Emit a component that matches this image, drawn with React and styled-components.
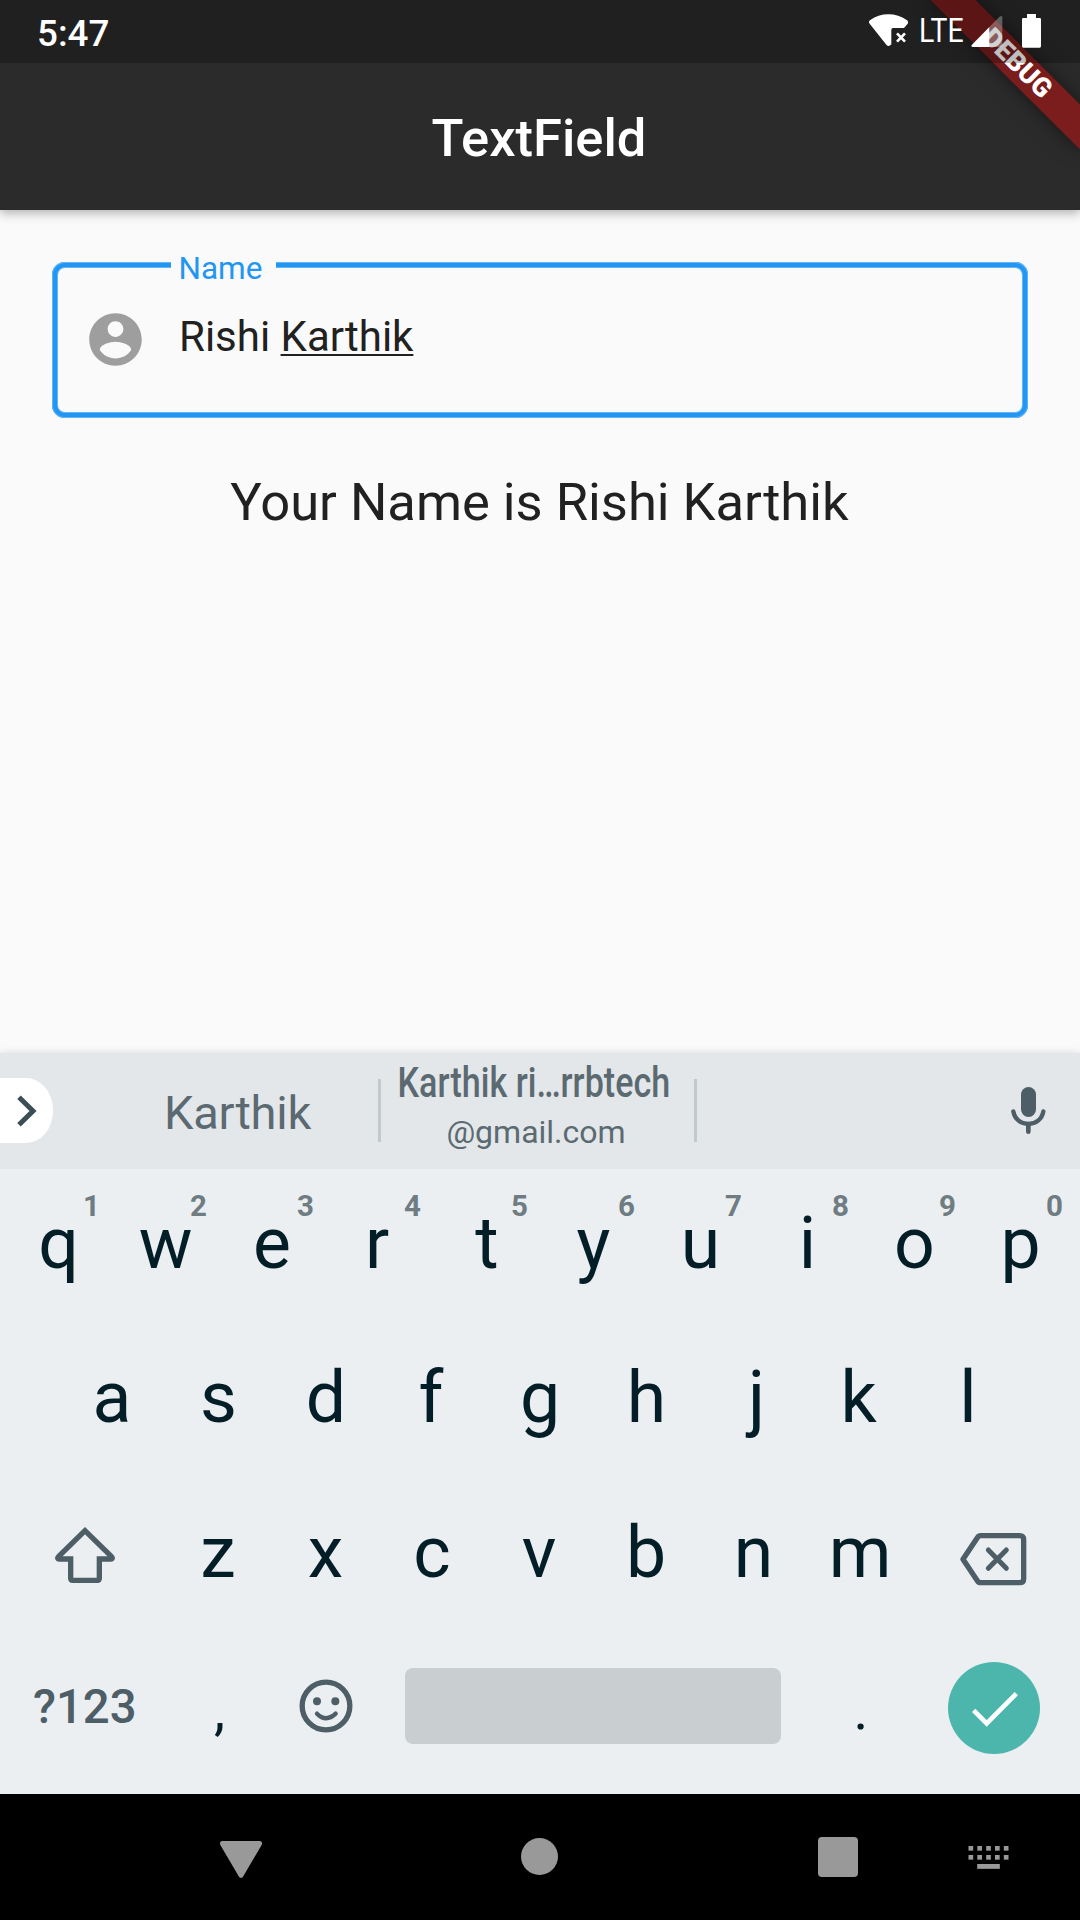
import React from "react";
import styled, { createGlobalStyle } from "styled-components";

const GlobalStyle = createGlobalStyle`
  *, *::before, *::after { box-sizing: border-box; }
  body { margin: 0; background: #fafafa; }
`;

const Screen = styled.div`
  display: flex;
  flex-direction: column;
  width: 1080px;
  height: 1920px;
  overflow: hidden;
  background: #fafafa;
  color: #212121;
  font-family: Roboto, "Liberation Sans", sans-serif;
`;

const Icon = styled.svg`
  display: block;
  flex: none;
  width: ${(p) => p.$w}px;
  height: ${(p) => p.$h}px;
`;

/* ---------- header ---------- */

const Header = styled.header`
  position: relative;
  z-index: 1;
  flex: none;
  height: 210px;
  background: #2b2b2b;
  box-shadow: 0 3px 10px rgba(0, 0, 0, 0.3);
`;

const StatusBar = styled.div`
  position: relative;
  z-index: 2;
  display: flex;
  justify-content: space-between;
  height: 63px;
  padding: 14px 38px 0 37px;
  background: rgba(0, 0, 0, 0.25);
  color: #fff;
`;

const Clock = styled.span`
  font-size: 36.75px;
  font-weight: 500;
  line-height: 39px;
`;

const StatusIcons = styled.div`
  display: flex;
  align-items: flex-start;
`;

const NetworkLabel = styled.span`
  width: 52px;
  margin-left: 10px;
  font-size: 33px;
  line-height: 34px;
  transform: scaleX(0.86);
  transform-origin: left;
`;

const SignalSlot = styled.div`
  margin-right: 18px;
`;

const Title = styled.h1`
  margin: 0;
  padding-right: 2px;
  color: #fff;
  font-size: 52.5px;
  font-weight: 500;
  line-height: 150px;
  text-align: center;
`;

const RibbonClip = styled.div`
  position: absolute;
  top: 0;
  right: 0;
  width: 260px;
  height: 210px;
  overflow: hidden;
`;

const Ribbon = styled.div`
  position: absolute;
  top: 73.5px;
  left: 155px;
  width: 210px;
  height: 31.5px;
  transform-origin: 105px -73.5px;
  transform: rotate(45deg);
  background: #7b1c1d;
  box-shadow: 0 0 19px rgba(0, 0, 0, 0.5);
  color: #fff;
  font-size: 26.8px;
  font-weight: 900;
  line-height: 31.5px;
  text-align: center;
`;

/* ---------- form ---------- */

const Content = styled.main`
  flex: none;
  display: flex;
  flex-direction: column;
  height: 843px;
  padding: 52px 52px 0;
`;

const Field = styled.div`
  position: relative;
  display: flex;
  align-items: flex-start;
  height: 156px;
  padding: 46px 32px 0;
  border-radius: 13px;
  box-shadow:
    inset 0 0 0 1px #64b5f7,
    inset 0 0 0 5px #2196f3,
    inset 0 0 0 6px #64b5f7;
`;

const FieldLabel = styled.label`
  position: absolute;
  top: -11px;
  left: 119px;
  width: 105px;
  padding-left: 7.5px;
  background: #fafafa;
  color: #2196f3;
  font-size: 31.5px;
  line-height: 36px;
`;

const FieldValue = styled.div`
  margin: 4px 0 0 32px;
  font-size: 42px;
  line-height: 49px;
`;

const Composing = styled.span`
  text-decoration: underline;
  text-decoration-thickness: 2px;
  text-decoration-skip-ink: none;
  text-underline-offset: 3px;
`;

const Message = styled.p`
  margin: 54px 0 0;
  padding-right: 1px;
  font-size: 52.5px;
  line-height: 60px;
  text-align: center;
`;

/* ---------- keyboard ---------- */

const Keyboard = styled.section`
  position: relative;
  flex: none;
  height: 741px;
  background: #ebeff2;
  color: #041e28;
  box-shadow: 0 0 8px rgba(0, 0, 0, 0.13);
`;

const Strip = styled.div`
  display: flex;
  height: 116px;
  background: #e3e7ea;
  color: #5b6a71;
`;

const Expand = styled.button`
  display: flex;
  align-items: center;
  width: 53px;
  height: 65px;
  margin: 25px 47px 0 0;
  padding: 0 0 0 15px;
  border: 0;
  border-radius: 0 27px 27px 0 / 0 32px 32px 0;
  background: #fff;
`;

const Suggestion = styled.div`
  display: flex;
  flex-direction: column;
  align-items: center;
  width: ${(p) => p.$width}px;
  padding-top: ${(p) => p.$top}px;
  padding-right: ${(p) => p.$shift || 0}px;
  white-space: nowrap;
`;

const Word = styled.span`
  font-size: 47px;
  line-height: 56px;
  letter-spacing: -0.2px;
`;

const Squeezed = styled.span`
  font-size: 42px;
  font-weight: 500;
  line-height: 48px;
  transform: scaleX(0.812);
`;

const SecondLine = styled.span`
  padding-left: 4px;
  font-size: 32px;
  line-height: 50px;
`;

const Divider = styled.div`
  width: 3px;
  height: 63px;
  margin-top: 26px;
  background: #c3c8cb;
`;

const MicSlot = styled.div`
  margin: 33px 33px 0 auto;
`;

const Row = styled.div`
  display: flex;
  height: 154.5px;
  padding: 0 ${(p) => p.$inset || 5}px;
`;

const Key = styled.div`
  position: relative;
  display: flex;
  align-items: center;
  justify-content: center;
  width: ${(p) => 107 * (p.$span || 1)}px;
  padding-top: ${(p) => p.$drop || 0}px;
  padding-bottom: ${(p) => p.$lift || 0}px;
  padding-left: ${(p) => Math.max(p.$nudge || 0, 0) * 2}px;
  padding-right: ${(p) => Math.max(-(p.$nudge || 0), 0) * 2}px;
`;

const Letter = styled.span`
  font-size: 71.5px;
  line-height: 84px;
`;

const Punct = styled.span`
  font-size: 56px;
  line-height: 66px;
`;

const Hint = styled.sup`
  position: absolute;
  top: 19px;
  right: 12px;
  color: #6f7c82;
  font-size: 29.5px;
  font-weight: 700;
  line-height: 36px;
`;

const Symbols = styled.span`
  color: #4d5e66;
  font-size: 47.25px;
  font-weight: 500;
  line-height: 56px;
`;

const Space = styled.div`
  width: 376px;
  height: 76px;
  border-radius: 8px;
  background: #c9ced1;
`;

const Enter = styled.div`
  display: flex;
  align-items: center;
  justify-content: center;
  width: 92px;
  height: 92px;
  border-radius: 50%;
  background: #4db6ac;
`;

/* ---------- navigation bar ---------- */

const NavBar = styled.nav`
  display: flex;
  flex: none;
  height: 126px;
  padding: 43px 0 0 220px;
  background: #000;
`;

const NavItem = styled.div`
  width: ${(p) => p.$w}px;
`;

const HomeDot = styled.div`
  width: 37px;
  height: 37px;
  margin-top: 1px;
  border-radius: 50%;
  background: #999;
`;

const RecentsSquare = styled.div`
  width: 40px;
  height: 40px;
  border-radius: 4px;
  background: #999;
`;

const GLYPH = "#4d5e66";

function WifiIcon() {
  return (
    <Icon $w={41} $h={35} viewBox="84 42 123 105" fill="#fff">
      <path d="M89 71Q84 65 91 60Q114 43 145 43T200 60Q207 65 203 71L192 84H159Q154 84 154 89V133Q146 143 139 134Z" />
      <path d="M171 100L195 125M195 100L171 125" stroke="#fff" strokeWidth="8" />
    </Icon>
  );
}

function SignalIcon() {
  return (
    <Icon $w={32} $h={35} viewBox="392 42 96 105" fill="#fff">
      <path d="M447 81V141H397Q390 140 395 134Z" />
      <path d="M447 81L477 51Q485 45 486 52V136Q486 141 481 141H447Z" opacity="0.3" />
    </Icon>
  );
}

function BatteryIcon() {
  return (
    <Icon $w={21} $h={35} viewBox="543 42 63 105" fill="#fff">
      <path d="M561 42H588V54H599Q603 54 603 58V139Q603 143 599 143H550Q546 143 546 139V58Q546 54 550 54H561Z" />
    </Icon>
  );
}

function AccountIcon() {
  return (
    <Icon $w={63} $h={63} viewBox="0 0 24 24" fill="#9e9e9e">
      <path d="M12 2C6.48 2 2 6.48 2 12s4.48 10 10 10 10-4.48 10-10S17.52 2 12 2zm0 3c1.66 0 3 1.34 3 3s-1.34 3-3 3-3-1.34-3-3 1.34-3 3-3zm0 14.2c-2.5 0-4.71-1.28-6-3.22.03-1.99 4-3.08 6-3.08 1.99 0 5.97 1.09 6 3.08-1.29 1.94-3.5 3.22-6 3.22z" />
    </Icon>
  );
}

function ChevronIcon() {
  return (
    <Icon $w={24} $h={34} viewBox="48 162 72 102" fill="none" stroke="#3c4d56" strokeWidth="15">
      <path d="M60 172L102 213L60 254" />
    </Icon>
  );
}

function MicIcon() {
  return (
    <Icon $w={37} $h={50} viewBox="930 138 111 150" fill="none" stroke={GLYPH} strokeLinecap="round">
      <rect x="963" y="141" width="45" height="90" rx="22.5" fill={GLYPH} stroke="none" />
      <path d="M940 214C944 238 963 252 985 252S1026 238 1030 214" strokeWidth="13" />
      <path d="M985 252V275" strokeWidth="14" />
    </Icon>
  );
}

function ShiftIcon() {
  return (
    <Icon $w={62} $h={60} viewBox="162 137 186 180" fill="none" stroke={GLYPH} strokeWidth="16">
      <path d="M255 154L177 230Q169 239 178 239H212V297Q212 303 218 303H292Q298 303 298 297V239H332Q341 239 333 230Z" />
    </Icon>
  );
}

function BackspaceIcon() {
  return (
    <Icon $w={70} $h={56} viewBox="654 152 210 168" fill="none" stroke={GLYPH} strokeWidth="16" strokeLinecap="round" strokeLinejoin="round">
      <path d="M669 237L712 172Q716 166 722 166H839Q851 166 851 178V295Q851 307 839 307H722Q716 307 712 301Z" />
      <path d="M745 209L799 264M799 209L745 264" strokeWidth="15" />
    </Icon>
  );
}

function SmileIcon() {
  return (
    <Icon $w={54} $h={54} viewBox="895 595 162 162" fill="none" stroke={GLYPH}>
      <circle cx="976" cy="676" r="71.5" strokeWidth="16" />
      <circle cx="949" cy="662" r="12" fill={GLYPH} stroke="none" />
      <circle cx="1004" cy="662" r="12" fill={GLYPH} stroke="none" />
      <path d="M949 699Q976 726 1005 699" strokeWidth="13" strokeLinecap="round" />
    </Icon>
  );
}

function CheckIcon() {
  return (
    <Icon $w={92} $h={92} viewBox="624 546 276 276" fill="none" stroke="#fff" strokeWidth="14">
      <path d="M701 691L740 730L829 641" />
    </Icon>
  );
}

function BackIcon() {
  return (
    <Icon $w={42} $h={43} viewBox="120 171 126 129" fill="#999">
      <path d="M127 183H239Q249 184 245 195L189 290Q183 297 177 290L121 195Q117 184 127 183Z" />
    </Icon>
  );
}

function KeyboardIcon() {
  return (
    <Icon $w={42} $h={42} viewBox="564 171 126 126" fill="#999">
      {[198, 225].map((y) =>
        [565.5, 592, 618.5, 645, 671.5].map((x) => (
          <rect key={`${x}-${y}`} x={x} y={y} width="14" height="14" />
        ))
      )}
      <rect x="591.5" y="252" width="68" height="14.5" />
    </Icon>
  );
}

/* optical centring of glyphs whose side bearings are uneven */
const OPTICAL = { r: -2.5, f: -2, k: -2.5, j: 2.5, z: -1, c: -1, v: -1, b: -1, h: -0.5, n: -0.5, m: -1, p: -1, t: 0.5, e: -0.5, s: -0.5, x: -0.5 };

function LetterKey({ char, hint }) {
  return (
    <Key $lift={5}>
      <Key $nudge={OPTICAL[char] || 0}>
        <Letter>{char}</Letter>
      </Key>
      {hint !== undefined && <Hint>{hint}</Hint>}
    </Key>
  );
}

const letters = (text) => text.split("").map((c) => <LetterKey key={c} char={c} />);

export default function App() {
  return (
    <Screen>
      <GlobalStyle />
      <Header>
        <StatusBar>
          <Clock>5:47</Clock>
          <StatusIcons>
            <WifiIcon />
            <NetworkLabel>LTE</NetworkLabel>
            <SignalSlot>
              <SignalIcon />
            </SignalSlot>
            <BatteryIcon />
          </StatusIcons>
        </StatusBar>
        <Title>TextField</Title>
        <RibbonClip>
          <Ribbon>DEBUG</Ribbon>
        </RibbonClip>
      </Header>

      <Content>
        <Field>
          <FieldLabel>Name</FieldLabel>
          <AccountIcon />
          <FieldValue>
            Rishi <Composing>Karthik</Composing>
          </FieldValue>
        </Field>
        <Message>Your Name is Rishi Karthik</Message>
      </Content>

      <Keyboard>
        <Strip>
          <Expand aria-label="Expand">
            <ChevronIcon />
          </Expand>
          <Suggestion $width={278} $top={32} $shift={3}>
            <Word>Karthik</Word>
          </Suggestion>
          <Divider />
          <Suggestion $width={313} $top={6} $shift={7}>
            <Squeezed>Karthik ri…rrbtech</Squeezed>
            <SecondLine>@gmail.com</SecondLine>
          </Suggestion>
          <Divider />
          <MicSlot>
            <MicIcon />
          </MicSlot>
        </Strip>

        <Row>
          {"qwertyuiop".split("").map((c, i) => (
            <LetterKey key={c} char={c} hint={(i + 1) % 10} />
          ))}
        </Row>
        <Row $inset={58.5}>{letters("asdfghjkl")}</Row>
        <Row>
          <Key $span={1.5}>
            <ShiftIcon />
          </Key>
          {letters("zxcvbnm")}
          <Key $span={1.5} $drop={7} $nudge={-2}>
            <BackspaceIcon />
          </Key>
        </Row>
        <Row>
          <Key $span={1.5} $lift={6} $nudge={-0.5}>
            <Symbols>?123</Symbols>
          </Key>
          <Key $nudge={0.5}>
            <Punct>,</Punct>
          </Key>
          <Key $lift={8} $nudge={-0.5}>
            <SmileIcon />
          </Key>
          <Key $span={4} $lift={7} $nudge={-1}>
            <Space />
          </Key>
          <Key>
            <Punct>.</Punct>
          </Key>
          <Key $span={1.5} $lift={4} $nudge={-1}>
            <Enter>
              <CheckIcon />
            </Enter>
          </Key>
        </Row>
      </Keyboard>

      <NavBar>
        <NavItem $w={301}>
          <BackIcon />
        </NavItem>
        <NavItem $w={297}>
          <HomeDot />
        </NavItem>
        <NavItem $w={150}>
          <RecentsSquare />
        </NavItem>
        <NavItem $w={42}>
          <KeyboardIcon />
        </NavItem>
      </NavBar>
    </Screen>
  );
}
